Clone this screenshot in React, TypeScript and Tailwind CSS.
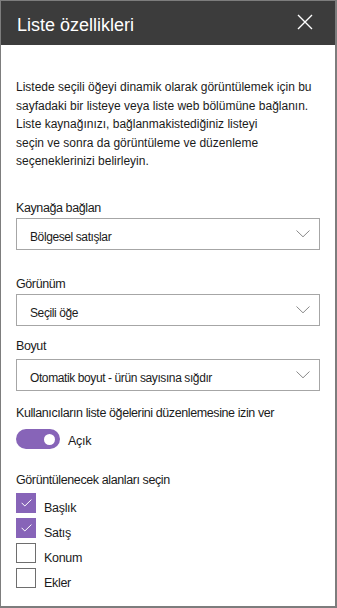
import React from 'react';

const font = { fontFamily: '"Liberation Sans", Arial, sans-serif' };

// Chevron used at the right edge of each dropdown
function Chevron() {
  return (
    <svg width="14" height="8" viewBox="0 0 14 8" fill="none">
      <path d="M0.5 0.5 L7 6.8 L13.5 0.5" stroke="#8a8a8a" strokeWidth="1" />
    </svg>
  );
}

function Dropdown({ value }: { value: string }) {
  return (
    <div className="flex h-[32px] items-center justify-between border border-[#a6a6a6] bg-white pl-[13px] pr-[9px]">
      <span className="pt-[6px] text-[12px] tracking-[-0.4px] text-[#1b1b1b]">{value}</span>
      <Chevron />
    </div>
  );
}

function Check({ label, checked }: { label: string; checked?: boolean }) {
  return (
    <div className="flex h-[20px] items-center gap-[8px]">
      {checked ? (
        <div className="flex h-[20px] w-[20px] shrink-0 items-center justify-center bg-[#8764b8]">
          <svg width="11" height="8" viewBox="0 0 11 8" fill="none">
            <path d="M0.6 3.8 L3.8 7 L10.4 0.6" stroke="#fff" strokeWidth="1" />
          </svg>
        </div>
      ) : (
        <div className="h-[20px] w-[20px] shrink-0 border-[1.5px] border-[#6e6e6e] bg-white" />
      )}
      <span className="pt-[9px] text-[12.5px] leading-[20px] tracking-[-0.3px] text-[#1b1b1b]">{label}</span>
    </div>
  );
}

export default function App() {
  return (
    <div
      style={font}
      className="flex h-[608px] w-[337px] flex-col border-t border-l border-r-2 border-b-2 border-[#7d7d7d] bg-white"
    >
      {/* Header */}
      <div className="flex h-[44px] shrink-0 items-center justify-between bg-[#3c3c3c] pl-[16px] pr-[22px]">
        <h1 className="pt-[5px] text-[18px] text-white">Liste özellikleri</h1>
        <svg width="16" height="16" viewBox="0 0 16 16" fill="none" className="mb-[3px]">
          <path d="M1 1 L15 15 M15 1 L1 15" stroke="#fff" strokeWidth="1.4" />
        </svg>
      </div>

      {/* Body */}
      <div className="flex flex-col px-[15px] pt-[33px] text-[#1b1b1b]">
        <p className="whitespace-nowrap text-[12px] leading-[18.5px]">
          Listede seçili öğeyi dinamik olarak görüntülemek için bu
          <br />
          sayfadaki bir listeye veya liste web bölümüne bağlanın.
          <br />
          Liste kaynağınızı, bağlanmakistediğiniz listeyi
          <br />
          seçin ve sonra da görüntüleme ve düzenleme
          <br />
          seçeneklerinizi belirleyin.
        </p>

        <label className="mt-[28px] text-[12.5px] leading-[18px] tracking-[-0.4px]">Kaynağa bağlan</label>
        <div className="mt-[1px]">
          <Dropdown value="Bölgesel satışlar" />
        </div>

        <label className="mt-[25px] text-[12.5px] leading-[18px] tracking-[-0.4px]">Görünüm</label>
        <div className="mt-[1px]">
          <Dropdown value="Seçili öğe" />
        </div>

        <label className="mt-[11px] text-[12.5px] leading-[18px] tracking-[-0.4px]">Boyut</label>
        <div className="mt-[4px]">
          <Dropdown value="Otomatik boyut - ürün sayısına sığdır" />
        </div>

        <label className="mt-[13px] text-[12.5px] leading-[18px] tracking-[-0.4px]">
          Kullanıcıların liste öğelerini düzenlemesine izin ver
        </label>
        <div className="mt-[7px] flex items-center gap-[8px]">
          <div className="flex h-[20px] w-[44px] items-center justify-end rounded-full bg-[#8764b8] pr-[5px]">
            <div className="h-[11px] w-[11px] rounded-full bg-white" />
          </div>
          <span className="pt-[3px] text-[12.5px] tracking-[-0.3px]">Açık</span>
        </div>

        <label className="mt-[21px] text-[12.5px] leading-[18px] tracking-[-0.4px]">Görüntülenecek alanları seçin</label>
        <div className="mt-[4px] flex flex-col gap-[5px]">
          <Check label="Başlık" checked />
          <Check label="Satış" checked />
          <Check label="Konum" />
          <Check label="Ekler" />
        </div>
      </div>
    </div>
  );
}
